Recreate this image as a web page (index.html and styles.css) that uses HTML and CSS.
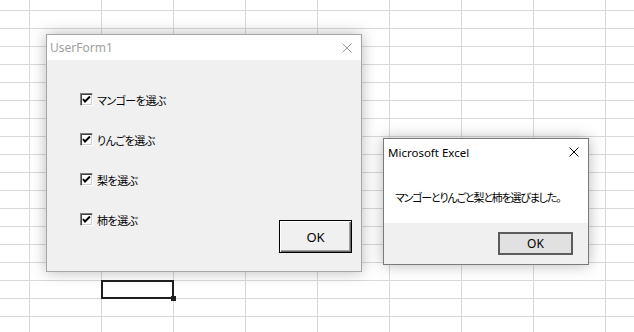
FILE: index.html
```html
<!DOCTYPE html>
<html lang="ja">
<head>
  <meta charset="UTF-8" />
  <title>UserForm1</title>
  <link rel="stylesheet" href="styles.css">
</head>
<body>
  <div class="sheet">
    <div class="active-cell"><span class="fill-handle"></span></div>

    <div class="userform">
      <div class="titlebar">
        <span class="title inactive">UserForm1</span>
        <svg class="close" width="10" height="10" viewBox="0 0 10 10"><path d="M0.5 0.5 L9.5 9.5 M9.5 0.5 L0.5 9.5" stroke="#9a9a9a" stroke-width="1" fill="none"/></svg>
      </div>
      <div class="form-body">
        <div class="check-list">
          <label class="check-row"><span class="checkbox"><svg width="9" height="9" viewBox="0 0 9 9"><path d="M1 4 L3 6.5 L8 1.5" stroke="#000" stroke-width="2" fill="none"/></svg></span>マンゴーを選ぶ</label>
          <label class="check-row"><span class="checkbox"><svg width="9" height="9" viewBox="0 0 9 9"><path d="M1 4 L3 6.5 L8 1.5" stroke="#000" stroke-width="2" fill="none"/></svg></span>りんごを選ぶ</label>
          <label class="check-row"><span class="checkbox"><svg width="9" height="9" viewBox="0 0 9 9"><path d="M1 4 L3 6.5 L8 1.5" stroke="#000" stroke-width="2" fill="none"/></svg></span>梨を選ぶ</label>
          <label class="check-row"><span class="checkbox"><svg width="9" height="9" viewBox="0 0 9 9"><path d="M1 4 L3 6.5 L8 1.5" stroke="#000" stroke-width="2" fill="none"/></svg></span>柿を選ぶ</label>
        </div>
        <button class="form-btn">OK</button>
      </div>
    </div>

    <div class="msgbox">
      <div class="msg-top">
        <div class="titlebar">
          <span class="title">Microsoft Excel</span>
          <svg class="close" width="10" height="10" viewBox="0 0 10 10"><path d="M0.5 0.5 L9.5 9.5 M9.5 0.5 L0.5 9.5" stroke="#000" stroke-width="1" fill="none"/></svg>
        </div>
        <p class="msg-text">マンゴーとりんごと梨と柿を選びました。</p>
      </div>
      <div class="msg-footer">
        <button class="msg-btn">OK</button>
      </div>
    </div>
  </div>
</body>
</html>
```

FILE: styles.css
```css
body {
  margin: 0;
  padding: 0;
  background: #fff;
  font-family: "Noto Sans", "Noto Sans CJK JP", sans-serif;
}
.sheet {
  position: relative;
  width: 634px;
  height: 332px;
  overflow: hidden;
  background-color: #fff;
  background-image:
    linear-gradient(to right, #d9d9d9 1px, transparent 1px),
    linear-gradient(to bottom, #d9d9d9 1px, transparent 1px);
  background-size: 72px 18px;
  background-position: 29px 10px;
}
.active-cell {
  position: absolute;
  left: 101px;
  top: 280px;
  width: 69px;
  height: 15px;
  border: 2px solid #1f1f1f;
}
.fill-handle {
  position: absolute;
  right: -4px;
  bottom: -4px;
  width: 5px;
  height: 5px;
  background: #1f1f1f;
}

/* user form */
.userform {
  position: absolute;
  left: 46px;
  top: 34px;
  width: 314px;
  height: 236px;
  border: 1px solid #a6a6a6;
  background: #f0f0f0;
  box-shadow: 0 0 14px rgba(0,0,0,0.28);
  display: flex;
  flex-direction: column;
}
.titlebar {
  display: flex;
  align-items: center;
  justify-content: space-between;
  height: 25px;
  background: #fff;
  padding: 0 9px 0 3px;
}
.title {
  font-size: 12px;
  color: #000;
}
.title.inactive {
  color: #a0a0a0;
}
.close {
  display: block;
}
.form-body {
  flex: 1;
  display: flex;
  justify-content: space-between;
  padding: 33px 9px 18px 33px;
}
.check-list {
  display: flex;
  flex-direction: column;
  gap: 27px;
}
.check-row {
  display: flex;
  align-items: center;
  gap: 4px;
  height: 13px;
  font-family: "Noto Sans CJK JP", sans-serif;
  font-size: 11px;
  font-feature-settings: "palt";
  letter-spacing: -0.5px;
  white-space: nowrap;
  color: #000;
}
.checkbox {
  box-sizing: border-box;
  width: 13px;
  height: 13px;
  background: #fff;
  border: 1px solid;
  border-color: #808080 #fff #fff #808080;
  box-shadow: inset 1px 1px #404040, inset -1px -1px #d4d0c8;
  display: flex;
  align-items: center;
  justify-content: center;
}
.checkbox svg {
  display: block;
}
.form-btn {
  align-self: flex-end;
  box-sizing: border-box;
  width: 73px;
  height: 33px;
  border: 1px solid #000;
  background: #f0f0f0;
  box-shadow: inset 1px 1px #fff, inset -1px -1px #696969, inset -2px -2px #a0a0a0;
  font-family: "Noto Sans", sans-serif;
  font-size: 13px;
  color: #000;
  padding: 0;
}

/* message box */
.msgbox {
  position: absolute;
  left: 383px;
  top: 138px;
  width: 204px;
  height: 125px;
  border: 1px solid #7a7a7a;
  background: #fff;
  box-shadow: 0 0 14px rgba(0,0,0,0.28);
  display: flex;
  flex-direction: column;
}
.msgbox .titlebar {
  height: 26px;
  padding: 0 9px 0 4px;
}
.msgbox .title {
  font-size: 11.5px;
}
.msg-top {
  flex: 1;
}
.msg-text {
  margin: 25px 0 0 11px;
  font-family: "Noto Sans CJK JP", sans-serif;
  font-size: 11px;
  line-height: 14px;
  font-feature-settings: "palt";
  letter-spacing: -1.2px;
  white-space: nowrap;
  color: #000;
}
.msg-footer {
  height: 41px;
  background: #f0f0f0;
  display: flex;
  justify-content: flex-end;
  align-items: flex-start;
  padding: 9px 15px 0 0;
  box-sizing: border-box;
}
.msg-btn {
  box-sizing: border-box;
  width: 75px;
  height: 23px;
  border: 2px solid #5c5c5c;
  background: #e1e1e1;
  font-family: "Noto Sans", sans-serif;
  font-size: 12px;
  color: #000;
  padding: 0;
}
```
